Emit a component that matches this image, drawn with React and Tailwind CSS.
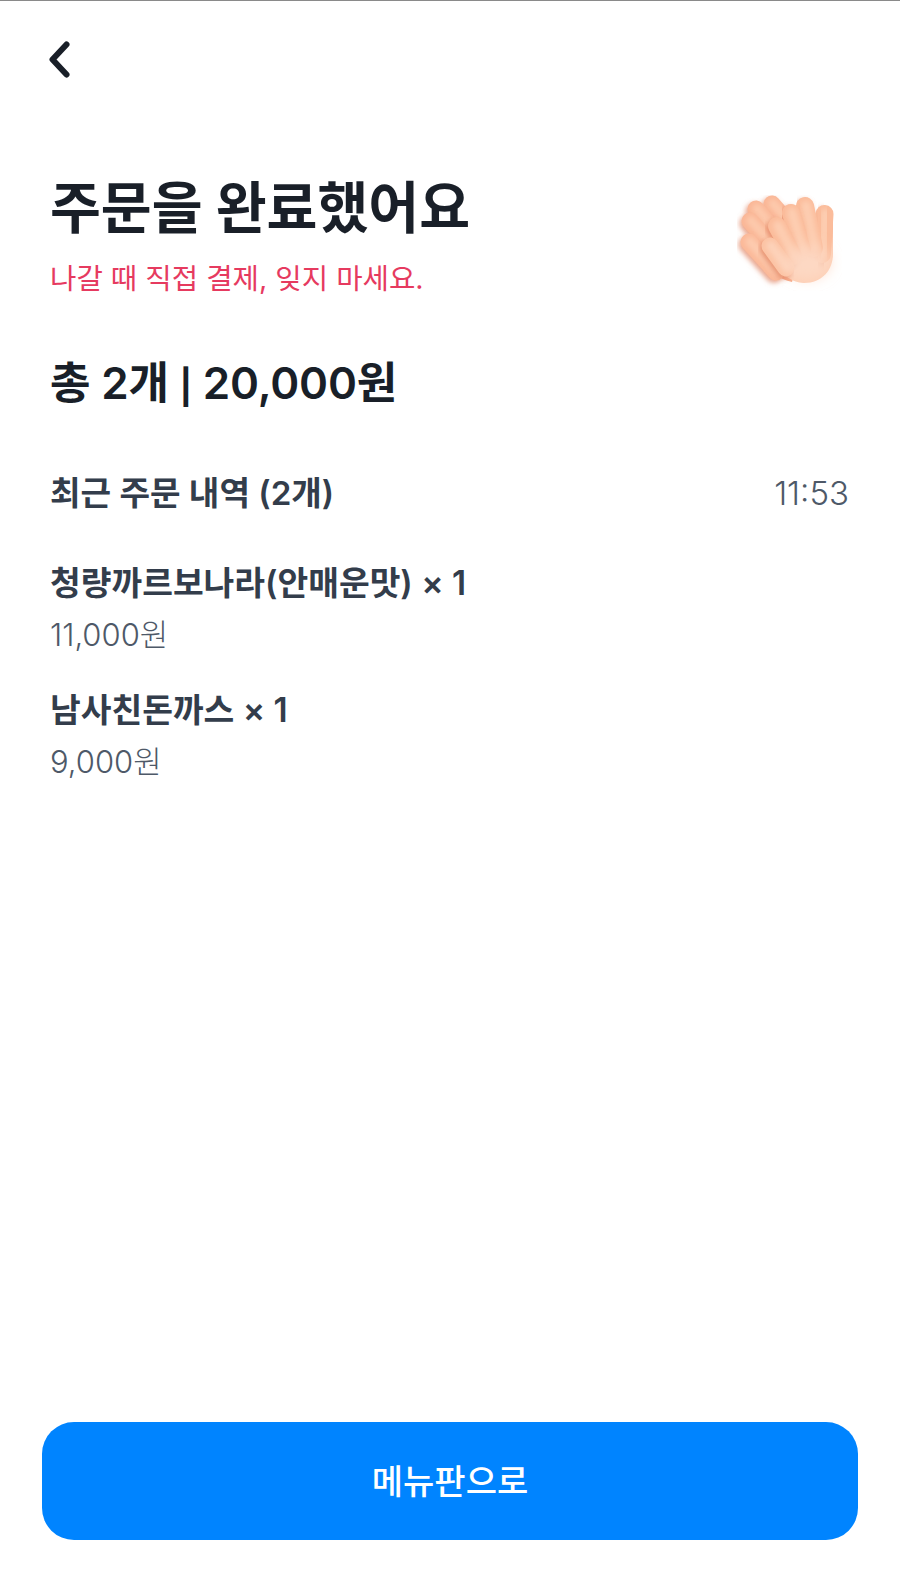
import React from 'react';

const Finger = ({ d, w = 17, light = '#fdcdb1', base = '#fbbc9b' }) => (
  <g>
    <path d={d} stroke="#e0805e" strokeOpacity="0.7" strokeWidth={w} strokeLinecap="round" filter="url(#shadow)" transform="translate(-2 2.5)" />
    <path d={d} stroke={base} strokeWidth={w} strokeLinecap="round" />
    <path d={d} stroke={light} strokeWidth={w * 0.55} strokeLinecap="round" filter="url(#glow)" transform="translate(1 -0.5)" />
  </g>
);

const HandIcon = () => (
  <svg width="160" height="130" viewBox="0 0 160 130" fill="none" className="shrink-0">
    <defs>
      <radialGradient id="palm" cx="0.58" cy="0.6" r="0.62">
        <stop offset="0" stopColor="#fddcc8" />
        <stop offset="0.65" stopColor="#fdcfb5" />
        <stop offset="1" stopColor="#f9b99a" />
      </radialGradient>
      <filter id="shadow" x="-60%" y="-60%" width="220%" height="220%"><feGaussianBlur stdDeviation="2.5" /></filter>
      <filter id="glow" x="-60%" y="-60%" width="220%" height="220%"><feGaussianBlur stdDeviation="2.5" /></filter>
      <filter id="wide" x="-60%" y="-60%" width="220%" height="220%"><feGaussianBlur stdDeviation="7" /></filter>
      <filter id="soft" x="-10%" y="-10%" width="120%" height="120%"><feGaussianBlur stdDeviation="0.5" /></filter>
    </defs>
    <g filter="url(#soft)">
      {/* back hand */}
      <path d="M46 72 C52 88 70 106 92 112 L104 70 L70 50 Z" fill="#f6a988" />
      <Finger d="M72 34 L98 64" base="#fab797" light="#fdc9ac" />
      <Finger d="M56 39 L82 70" base="#fab797" light="#fdc9ac" />
      <Finger d="M50 51 L76 80" base="#fab797" light="#fdc9ac" />
      <Finger d="M49 72 L76 102" base="#fbb999" light="#fdcbaf" />
      {/* front hand */}
      <path d="M65 78 C72 96 88 113 104 113 C122 113 133 100 133 84 L133 48 L90 50 Z" fill="url(#palm)" />
      <Finger d="M124.500 44 L122 84" w={18} />
      <Finger d="M105 36 L114 78" w={18} />
      <Finger d="M91 43 L102 80" w={18} />
      <Finger d="M77 56 L93 86" w={18} />
      <Finger d="M70 76 L86 98" base="#fcc3a4" light="#fdd2b9" />
      <ellipse cx="108" cy="92" rx="22" ry="16" fill="#fdd8c3" filter="url(#wide)" />
    </g>
  </svg>
);

const OrderItem = ({ name, price }) => (
  <div className="flex flex-col">
    <span className="text-[33.4px] leading-[44px] font-semibold text-[#333d4b]">{name}</span>
    <span className="text-[31px] leading-[44px] font-light text-[#4e5968] mt-[8px]">{price}</span>
  </div>
);

export default function App() {
  return (
    <div
      className="w-[900px] h-[1576px] bg-white flex flex-col border-t border-[#8a8a8a]"
      style={{ fontFamily: '"Inter", "Noto Sans CJK KR", sans-serif' }}
    >
      <div className="px-[42px] pt-[32px] h-[169px]">
        <svg width="36" height="54" viewBox="0 0 36 54" fill="none">
          <path d="M24.5 11.500 L10.5 26.500 L24.5 41.500" stroke="#191f28" strokeWidth="6" strokeLinecap="round" strokeLinejoin="round" />
        </svg>
      </div>

      <div className="flex items-start justify-between pl-[50px] pr-[40px]">
        <div className="flex flex-col pt-[2px]">
          <h1 className="text-[55.3px] leading-[72px] font-bold text-[#191f28]">주문을 완료했어요</h1>
          <p className="text-[28.7px] leading-[40px] mt-[15px] text-[#e63a5f]">나갈 때 직접 결제, 잊지 마세요.</p>
        </div>
        <HandIcon />
      </div>

      <div className="px-[50px] mt-[53px] h-[60px]">
        <h2 className="text-[44px] leading-[60px] font-semibold text-[#191f28] tracking-[-0.2px]">
          총 2개 <span className="text-[34px] leading-none font-bold">|</span> 20,000원
        </h2>
      </div>

      <div className="flex items-center justify-between pl-[50px] pr-[51px] mt-[58px]">
        <span className="text-[33.2px] leading-[44px] font-semibold text-[#333d4b]">최근 주문 내역 (2개)</span>
        <span className="text-[33px] leading-[44px] font-light text-[#4e5968]">11:53</span>
      </div>

      <div className="flex flex-col gap-[31px] px-[50px] mt-[46px]">
        <OrderItem name="청량까르보나라(안매운맛) × 1" price="11,000원" />
        <OrderItem name="남사친돈까스 × 1" price="9,000원" />
      </div>

      <div className="flex-1" />

      <div className="px-[42px] pb-[36px]">
        <button className="w-full h-[118px] rounded-[32px] bg-[#0084ff] text-white text-[34px] font-medium flex items-center justify-center">
          메뉴판으로
        </button>
      </div>
    </div>
  );
}
